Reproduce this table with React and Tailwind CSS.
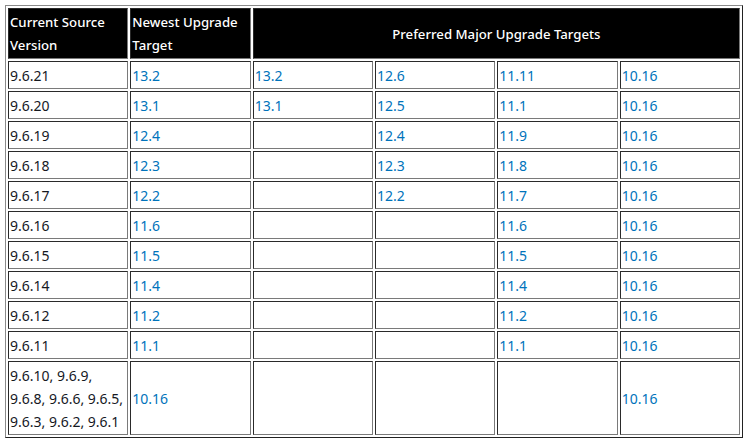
const rows = [
  ['9.6.21', '13.2', '13.2', '12.6', '11.11', '10.16'],
  ['9.6.20', '13.1', '13.1', '12.5', '11.1', '10.16'],
  ['9.6.19', '12.4', '', '12.4', '11.9', '10.16'],
  ['9.6.18', '12.3', '', '12.3', '11.8', '10.16'],
  ['9.6.17', '12.2', '', '12.2', '11.7', '10.16'],
  ['9.6.16', '11.6', '', '', '11.6', '10.16'],
  ['9.6.15', '11.5', '', '', '11.5', '10.16'],
  ['9.6.14', '11.4', '', '', '11.4', '10.16'],
  ['9.6.12', '11.2', '', '', '11.2', '10.16'],
  ['9.6.11', '11.1', '', '', '11.1', '10.16'],
  ['9.6.10, 9.6.9, 9.6.8, 9.6.6, 9.6.5, 9.6.3, 9.6.2, 9.6.1', '10.16', '', '', '', '10.16'],
]

const cell =
  'border border-t-[#2a2a2a] border-l-[#2a2a2a] border-b-[#7a7a7a] border-r-[#7a7a7a] px-[1px] pt-[2px] pb-[1px] align-middle'

export default function App() {
  return (
    <div className="min-h-screen bg-white p-[5px]" style={{ fontFamily: '"Noto Sans", "Open Sans", sans-serif' }}>
      <table className="w-[738px] table-fixed border-separate border-spacing-[2px] border border-t-[#8a8a8a] border-l-[#8a8a8a] border-b-[#222] border-r-[#222] text-[14px] leading-[23px] text-[#16191f]">
        <thead>
          <tr>
            <th className={`${cell} bg-black text-white text-left font-medium text-[13.2px] py-[4px]`}>Current Source Version</th>
            <th className={`${cell} bg-black text-white text-left font-medium text-[13.2px] py-[4px]`}>Newest Upgrade Target</th>
            <th colSpan={4} className={`${cell} bg-black text-white text-center font-medium text-[13.2px] py-[4px]`}>
              Preferred Major Upgrade Targets
            </th>
          </tr>
        </thead>
        <tbody>
          {rows.map((r) => (
            <tr key={r[0]}>
              {r.map((v, i) => (
                <td key={i} className={`${cell} ${i === 0 ? '' : 'text-[#0073bb]'}`}>
                  {v}
                </td>
              ))}
            </tr>
          ))}
        </tbody>
      </table>
    </div>
  )
}
